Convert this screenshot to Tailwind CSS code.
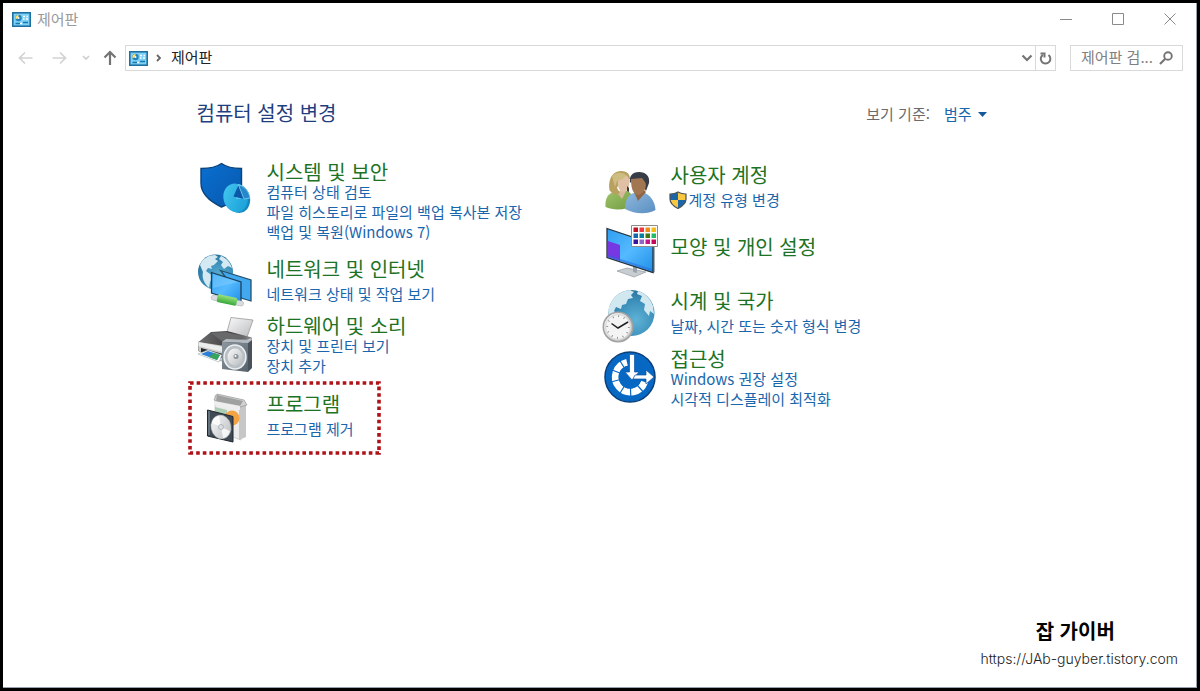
<!DOCTYPE html>
<html lang="ko">
<head>
<meta charset="utf-8">
<meta name="viewport" content="width=device-width, initial-scale=1">
<title>제어판</title>
<script src="https://cdn.jsdelivr.net/npm/@tailwindcss/browser@4"></script>
</head>
<body class="bg-black font-['Noto_Sans_CJK_KR','Noto_Sans',sans-serif]">
<svg width="0" height="0" class="absolute" aria-hidden="true">
  <defs>
    <linearGradient id="shieldBlue" x1="0" y1="0" x2="1" y2="1"><stop offset="0" stop-color="#0a6fd0"/><stop offset="1" stop-color="#0758ad"/></linearGradient>
    <linearGradient id="pieBlue" x1="0" y1="0" x2="1" y2="1"><stop offset="0" stop-color="#45c8f0"/><stop offset="1" stop-color="#159bd6"/></linearGradient>
    <radialGradient id="globeBlue" cx=".6" cy=".65" r=".7"><stop offset="0" stop-color="#5fb2d6"/><stop offset=".6" stop-color="#3b8fba"/><stop offset="1" stop-color="#276f98"/></radialGradient>
    <linearGradient id="screenBlue" x1="0" y1="0" x2="1" y2="1"><stop offset="0" stop-color="#2f9df0"/><stop offset=".5" stop-color="#55baff"/><stop offset="1" stop-color="#1f8fe8"/></linearGradient>
    <linearGradient id="metal" x1="0" y1="0" x2="1" y2="1"><stop offset="0" stop-color="#fafafa"/><stop offset="1" stop-color="#b9bcbf"/></linearGradient>
    <linearGradient id="darkTop" x1="0" y1="0" x2="1" y2="0"><stop offset="0" stop-color="#6d6d6f"/><stop offset=".6" stop-color="#3f3f41"/><stop offset="1" stop-color="#8b8b8d"/></linearGradient>
    <linearGradient id="speaker" x1="0" y1="0" x2="1" y2="1"><stop offset="0" stop-color="#8d979f"/><stop offset="1" stop-color="#56616b"/></linearGradient>
    <linearGradient id="green" x1="0" y1="0" x2="0" y2="1"><stop offset="0" stop-color="#9be27c"/><stop offset="1" stop-color="#35a83a"/></linearGradient>
    <linearGradient id="shirtGreen" x1="0" y1="0" x2="1" y2="1"><stop offset="0" stop-color="#a0c46b"/><stop offset="1" stop-color="#719b40"/></linearGradient>
    <linearGradient id="shirtBlue" x1="0" y1="0" x2="1" y2="1"><stop offset="0" stop-color="#8fb9de"/><stop offset="1" stop-color="#5a8ec1"/></linearGradient>
    <symbol id="cpanel" viewBox="0 0 19 15">
      <rect x=".75" y=".75" width="17.500" height="13.500" fill="#64c0ee" stroke="#1f6f9f" stroke-width="1.500"/>
      <rect x="2" y="2" width="15" height="11" fill="#7fd0f5"/>
      <circle cx="6.500" cy="6" r="3.200" fill="#2682bd"/><path d="M6.500 6V2.800A3.200 3.200 0 0 0 3.600 7.200z" fill="#ffe066"/><circle cx="6.500" cy="6" r="1" fill="#f0fbff"/>
      <path d="M11 4.500h2M14.500 4.500h1.500M11 7h1.500M14 7h2" stroke="#fff" stroke-width="1.400"/>
      <path d="M3.500 11.500h5M11 10.500h5" stroke="#1778ad" stroke-width="1.600"/><path d="M8 11.500h2" stroke="#fff" stroke-width="1.400"/>
    </symbol>
  </defs>
</svg>

<div class="flex min-h-screen flex-col p-[3px]">
<div class="flex flex-1 flex-col border-r border-b border-gray-400 bg-white">

  <header>
    <div class="flex h-8 items-center pl-[9px]">
      <svg class="h-[15px] w-[19px]"><use href="#cpanel"/></svg>
      <h1 class="ml-1.5 text-[15px] leading-5 text-[#9a9a9a]">제어판</h1>
      <div class="ml-auto flex text-[#8a8a8a]">
        <button aria-label="최소화" class="flex h-8 w-[52px] items-center justify-center"><svg class="size-3" viewBox="0 0 12 12" fill="none" stroke="currentColor"><path d="M0 6.500h12"/></svg></button>
        <button aria-label="최대화" class="flex h-8 w-[52px] items-center justify-center"><svg class="size-3" viewBox="0 0 12 12" fill="none" stroke="currentColor"><path d="M.5.5h11v11H.5z"/></svg></button>
        <button aria-label="닫기" class="flex h-8 w-[52px] items-center justify-center"><svg class="size-3" viewBox="0 0 12 12" fill="none" stroke="currentColor"><path d="M.5.5l11 11M11.500.5l-11 11"/></svg></button>
      </div>
    </div>

    <nav class="mt-2.5 flex items-center pr-[13px] pl-[15px]">
      <button aria-label="뒤로" class="text-[#d2d2d2]"><svg class="size-4" viewBox="0 0 16 16" fill="none" stroke="currentColor" stroke-width="1.700"><path d="M14.500 8H1.500M7 2.500L1.500 8 7 13.500"/></svg></button>
      <button aria-label="앞으로" class="ml-[18px] text-[#d2d2d2]"><svg class="size-4" viewBox="0 0 16 16" fill="none" stroke="currentColor" stroke-width="1.700"><path d="M.5 8h13M8 2.500L13.500 8 8 13.500"/></svg></button>
      <button aria-label="최근 위치" class="ml-3.5 text-[#cfcfcf]"><svg class="size-2" viewBox="0 0 8 8" fill="none" stroke="currentColor" stroke-width="1.700"><path d="M1 2l3 3 3-3"/></svg></button>
      <button aria-label="위로" class="ml-3 text-[#747474]"><svg class="size-4" viewBox="0 0 16 16" fill="none" stroke="currentColor" stroke-width="2.200"><path d="M8 15V2M2.500 7.500L8 2l5.500 5.500"/></svg></button>
      <div class="ml-[7px] flex h-[26px] flex-1 items-center border border-[#d9d9d9] pl-[3px]">
        <svg class="h-[15px] w-[19px]"><use href="#cpanel"/></svg>
        <svg class="ml-[7px] size-2" viewBox="0 0 8 8" fill="none" stroke="#666" stroke-width="1.800"><path d="M2 1l3 3-3 3"/></svg>
        <a href="#" class="ml-2 pb-0.5 text-[15px] leading-5 text-[#222]">제어판</a>
        <button aria-label="이전 위치" class="ml-auto flex h-6 w-4 items-center justify-center text-[#747474]"><svg class="h-2 w-3" viewBox="0 0 12 8" fill="none" stroke="currentColor" stroke-width="2.200"><path d="M1.500 1.500L6 6l4.500-4.500"/></svg></button>
        <button aria-label="새로 고침" class="flex h-6 w-5 items-center justify-center border-l border-[#d9d9d9] text-[#747474]"><svg class="size-[13px]" viewBox="0 0 13 13" fill="none" stroke="currentColor" stroke-width="2"><path d="M9.500 3a4.800 4.800 0 1 1-5.600-.2"/><path d="M1.500 1.500h4v4"/></svg></button>
      </div>
      <form class="ml-3.5 flex h-[26px] w-[113px] items-center border border-[#d9d9d9] pl-2.5" onsubmit="return false">
        <input type="text" aria-label="제어판 검색" placeholder="제어판 검..." class="w-[74px] pb-0.5 text-[15px] leading-5 outline-none placeholder:text-[#808080]">
        <button aria-label="검색" class="ml-1 text-[#747474]"><svg class="size-3.5" viewBox="0 0 14 14" fill="none" stroke="currentColor"><circle cx="9" cy="5" r="3.800" stroke-width="1.900"/><path d="M6 8L1 13" stroke-width="2.200"/></svg></button>
      </form>
    </nav>
  </header>

  <main class="mt-[30px] pr-4">
    <div class="mx-auto max-w-[808px]">
      <div class="flex items-center justify-between px-[9px]">
        <h2 class="pb-0.5 text-[20px] leading-6 text-[#1f3f7f]">컴퓨터 설정 변경</h2>
        <div class="flex items-center text-[15px] leading-6">
          <span class="text-[#6b6b6b]">보기 기준:</span>
          <button class="ml-3.5 flex items-center text-[#1a66ac]">범주<svg class="ml-1.5 h-[5px] w-[9px]" viewBox="0 0 9 5" fill="#14599c"><path d="M0 0h9L4.500 5z"/></svg></button>
        </div>
      </div>

      <div class="mt-[34px] grid grid-cols-2 text-[15px] leading-5 text-[#1a66ac]">
        <div class="flex flex-col items-start">

          <section class="flex gap-3.5 px-[9px]">
            <svg class="size-14 shrink-0" viewBox="0 0 56 56">
              <path d="M24.500 2.500C30 6.500 37 7.500 44.500 7.500V24C44.500 34 35 42 24.500 46 14 41 4 34 4 22V7.500C12 7.500 19 6.500 24.500 2.500z" fill="url(#shieldBlue)" stroke="#0b4279" stroke-width="1.400"/>
              <ellipse cx="41" cy="37.500" rx="12" ry="14.500" transform="rotate(-15 41 37.500)" fill="#1388c0"/>
              <ellipse cx="38.500" cy="37" rx="12" ry="14.500" transform="rotate(-15 38.500 37)" fill="url(#pieBlue)"/>
              <path d="M39 38l2-15c6 1 11 7 12 14z" fill="#5cc9ee"/>
              <path d="M36.500 35.500l5-11.500 5.500 14z" fill="#0c58a8"/><path d="M41.500 24l5.500 14 6-1c-1-6-5-12-11.500-13z" fill="#2687cb" stroke="#8de0fa" stroke-width=".6"/>
            </svg>
            <div>
              <h3 class="text-[20px] leading-[21px] text-[#1d7324]"><a href="#">시스템 및 보안</a></h3>
              <ul><li><a href="#">컴퓨터 상태 검토</a></li><li><a href="#">파일 히스토리로 파일의 백업 복사본 저장</a></li><li><a href="#">백업 및 복원(Windows 7)</a></li></ul>
            </div>
          </section>

          <section class="mt-[11px] flex gap-3.5 px-[9px]">
            <svg class="size-14 shrink-0" viewBox="0 0 56 56">
              <circle cx="18.500" cy="19" r="17.500" fill="url(#globeBlue)"/>
              <path d="M3 12C6 5 12 2 18 2l3 2-3 2 3 2-4 4-3 1 1 3-4-1-2 3 4 3 3 2-3 6-1 6C6 29 5 24 6 19zM24 3c5 2 9 6 11 12l-4-2-4 3-3-4 2-3-4-3z" fill="#d4e9f1"/>
              <path d="M23.500 17.500L54 27v21l-10-3z" fill="#42a9f0" stroke="#22516f" stroke-width="1.300"/>
              <path d="M14.500 19.500L44 29v20l-29.500-9z" fill="url(#screenBlue)" stroke="#1e4058" stroke-width="1.300"/>
              <path d="M16 21l25 8-25 6z" fill="#8ad2ff" opacity=".45"/>
              <g transform="rotate(12 30 47)"><rect x="14" y="45" width="33" height="5" rx="2.500" fill="#d9dde0" stroke="#a7acb0" stroke-width=".5"/><rect x="20" y="43" width="20" height="8" rx="2" fill="url(#green)"/></g>
            </svg>
            <div class="pt-[5px]">
              <h3 class="text-[20px] leading-[21px] text-[#1d7324]"><a href="#">네트워크 및 인터넷</a></h3>
              <ul class="mt-[5px]"><li><a href="#">네트워크 상태 및 작업 보기</a></li></ul>
            </div>
          </section>

          <section class="mt-1.5 flex gap-3.5 px-[9px]">
            <svg class="size-14 shrink-0 overflow-visible" viewBox="0 0 56 56">
              <path d="M34 2.500l22 2.500-6 17-20-5z" fill="url(#metal)" stroke="#999" stroke-width=".8"/>
              <path d="M1.500 27v9l23 10 30-5V23z" fill="#c9cbcd" stroke="#808080" stroke-width=".6"/>
              <path d="M1.500 27L14 17l16-1 25 6.500L34 32z" fill="url(#darkTop)"/>
              <path d="M14 18l15-1 20 5-23 5z" fill="#68696b"/>
              <path d="M1.500 27L26 32v5L1.500 31z" fill="#eceded"/>
              <path d="M4 33l22 6v4L4 37z" fill="#252628"/>
              <path d="M1 39l10-4 14 5-3 7z" fill="#fff" stroke="#9aa" stroke-width=".6"/><path d="M4 39l7-3 12 4-3 5z" fill="#2a7fd6"/><path d="M12 42l5-4 6 2-3 5z" fill="#3aa55a"/>
              <path d="M25 27l4-3 26 1-4 3z" fill="#b2bac0"/><path d="M51 28l4-3v28l-4 4z" fill="#48525b"/>
              <path d="M25 27l26 1v29l-26-3z" fill="url(#speaker)"/>
              <ellipse cx="38" cy="42" rx="11" ry="12" fill="#b8c0c5" stroke="#edf0f2" stroke-width="1.500"/>
              <ellipse cx="38" cy="42" rx="7.500" ry="8.500" fill="url(#metal)"/><circle cx="39" cy="41.500" r="2.500" fill="#8a949b"/><circle cx="38.500" cy="41" r="1" fill="#fff"/>
            </svg>
            <div>
              <h3 class="text-[20px] leading-[21px] text-[#1d7324]"><a href="#">하드웨어 및 소리</a></h3>
              <ul><li><a href="#">장치 및 프린터 보기</a></li><li><a href="#">장치 추가</a></li></ul>
            </div>
          </section>

          <section class="relative mt-[5px] flex w-[193px] gap-3.5 px-[9px] pt-2 pb-2.5">
            <svg class="pointer-events-none absolute inset-0 size-full overflow-visible" fill="none" aria-hidden="true"><rect x="2" y="2" width="189" height="70" stroke="#b01217" stroke-width="3.600" stroke-dasharray="3.600 3.040"/></svg>
            <svg class="size-14 shrink-0" viewBox="0 0 56 56">
              <path d="M18 6l26 8v37l-26-9z" fill="#ececec" stroke="#bbb" stroke-width=".6"/>
              <path d="M42 15l7-2v35l-7 3z" fill="#c7c7c7"/>
              <path d="M17 11l3-6 27 6 3 5-7 2-24-6z" fill="#d2d2d2" stroke="#979797" stroke-width=".7"/><path d="M20 6l26 6-3 5-24-5z" fill="#9fa0a0"/><path d="M17 12l26 5v4l-26-5z" fill="#eee"/>
              <path d="M18 18l12 3v9l-12-3z" fill="#abcdb3"/>
              <circle cx="35" cy="29" r="7.500" fill="#f3a343"/>
              <path d="M10.500 21L36 27.500v25.500L10.500 47z" fill="#3f4a55" stroke="#20262c" stroke-width="1"/><path d="M12 22v24" stroke="#8999a4"/>
              <ellipse cx="24" cy="38" rx="10" ry="12" transform="rotate(-12 24 38)" fill="url(#metal)" stroke="#a1a9ae" stroke-width=".5"/>
              <path d="M24 38l-9-4c1-4 4-7 7-7zM24 38l9 4c-1 4-4 7-7 7z" fill="#fff" opacity=".8"/>
              <circle cx="24" cy="38" r="2.500" fill="#dce0e3" stroke="#9aa5ad" stroke-width=".7"/>
            </svg>
            <div class="pt-1">
              <h3 class="text-[20px] leading-[21px] text-[#1d7324]"><a href="#">프로그램</a></h3>
              <ul class="mt-[5px]"><li><a href="#">프로그램 제거</a></li></ul>
            </div>
          </section>
        </div>

        <div class="flex flex-col items-start">
          <section class="flex gap-3.5 px-[9px]">
            <svg class="size-14 shrink-0" viewBox="0 0 56 56">
              <path d="M4.500 46c-.5-8 1.500-13 9.500-16h12c5 2 7 6 7 14-7 5-20 6-28.500 2z" fill="url(#shirtGreen)"/>
              <path d="M15 30l6 8 4-8z" fill="#d9b99b"/>
              <path d="M9 30C7 25 8 10 20 10c7 0 9 4 9 8l-10 2-3 7 3 5-5 2z" fill="#b8a05f"/>
              <path d="M17 19c4 0 6-3 8-5 4 3 4 7 3 11-1 4-4 7-7 6-3-1-5-7-4-12z" fill="#e0c0a5"/>
              <path d="M11 15c4-4 10-4 14-1-2 4-6 5-9 6l-2 6z" fill="#cdbd81"/>
              <path d="M24 48c0-10 4-15 11-17h6c8 2 13 9 13.500 18-9 5-21 4-30.500-1z" fill="url(#shirtBlue)"/>
              <path d="M33 31l4 9 8-9-3-3h-7z" fill="#8f6546"/>
              <path d="M29 22c-1-7 2-11 9-11s11 4 10 11l-3 8-4-7-10-3z" fill="#373d46"/>
              <path d="M30 18l11-1 3 4c3 4-2 13-7 13-6-1-7-9-7-16z" fill="#a27650"/>
              <path d="M26 25l2 2v4l-2-1z" fill="#403a36"/>
            </svg>
            <div class="pt-[3px]">
              <h3 class="text-[20px] leading-[21px] text-[#1d7324]"><a href="#">사용자 계정</a></h3>
              <ul class="mt-[5px]"><li><a href="#" class="-ml-0.5 flex items-center"><svg class="mr-0.5 size-[18px]" viewBox="0 0 18 18"><path d="M9 1c2.500 1.500 5 2 8 2v5c0 4-4 7.500-8 9.500C5 15.500 1 12 1 8V3c3 0 5.500-.5 8-2z" fill="#f9c840"/><path d="M9 1v8H1V3c3 0 5.500-.5 8-2zM9 9h8c-.5 3.500-4 6.500-8 8.500z" fill="#1c66a8"/><path d="M9 1c2.500 1.500 5 2 8 2v5c0 4-4 7.500-8 9.500C5 15.500 1 12 1 8V3c3 0 5.500-.5 8-2z" fill="none" stroke="#4b5358" stroke-width="1.200"/></svg>계정 유형 변경</a></li></ul>
            </div>
          </section>

          <section class="mt-[7px] flex gap-3.5 px-[9px]">
            <svg class="size-14 shrink-0 overflow-visible" viewBox="0 0 56 56">
              <path d="M16 47l10-3 19 4-12 5z" fill="#c8cdd1" stroke="#878e94" stroke-width=".6"/><path d="M32 40h4v9l-4-1z" fill="#9ca4aa"/>
              <path d="M52 22l2-1v27l-2 1z" fill="#a8afb3"/>
              <path d="M6 4.500L52 20v28.500L6 33.500z" fill="url(#screenBlue)" stroke="#25313b" stroke-width="1.300"/>
              <path d="M7 17l12 4v16L7 33z" fill="#7638e2"/><path d="M19 37L7 33v-2l44 14v2z" fill="#2a6ade" opacity=".55"/>
              <path d="M30.500 1.500h26v21h-26z" fill="#fff" stroke="#8c8c8c"/>
              <path d="M32.500 3.500h4.500v4.500h-4.500z" fill="#c10f24"/><path d="M38.500 3.500h4.500v4.500h-4.500z" fill="#f2383e"/><path d="M44.500 3.500h4.500v4.500h-4.500z" fill="#f08b19"/><path d="M50.500 3.500h4.500v4.500h-4.500z" fill="#f5bd13"/>
              <path d="M32.500 9.500h4.500v4.500h-4.500z" fill="#1766ad"/><path d="M38.500 9.500h4.500v4.500h-4.500z" fill="#067fa1"/><path d="M44.500 9.500h4.500v4.500h-4.500z" fill="#427817"/><path d="M50.500 9.500h4.500v4.500h-4.500z" fill="#20bd69"/>
              <path d="M32.500 15.500h4.500v4.500h-4.500z" fill="#3b119d"/><path d="M38.500 15.500h4.500v4.500h-4.500z" fill="#8f66c9"/><path d="M44.500 15.500h4.500v4.500h-4.500z" fill="#c4138e"/><path d="M50.500 15.500h4.500v4.500h-4.500z" fill="#c8095a"/>
            </svg>
            <div class="pt-3"><h3 class="text-[20px] leading-[21px] text-[#1d7324]"><a href="#">모양 및 개인 설정</a></h3></div>
          </section>

          <section class="mt-[7px] flex gap-3.5 px-[9px]">
            <svg class="size-14 shrink-0" viewBox="0 0 56 56">
              <circle cx="30.500" cy="26" r="23" fill="url(#globeBlue)"/>
              <path d="M9 18C12 9 20 4 29 3l4 2-3 3 2 3-5 1-2 5-4 1-1 4-5-2-2 4 3 3-4 2-4-1c-1-4-1-7 1-10zM37 4c7 2 12 7 15 15l1 8-4-3-1 5-5-6 1-6-5-3 2-5-5-2z" fill="#d2e8f1"/>
              <circle cx="17" cy="40" r="14.700" fill="url(#metal)" stroke="#a2a2a2" stroke-width="1.600"/><circle cx="17" cy="40" r="12.500" fill="#f4f4f4" stroke="#d8d8d8"/>
              <circle cx="17" cy="40" r="10.800" fill="none" stroke="#777" stroke-width="1.800" stroke-dasharray=".8 4.855"/>
              <path d="M10.500 36.500L17 41l10-6" fill="none" stroke="#222" stroke-width="1.500"/>
            </svg>
            <div class="pt-[3px]">
              <h3 class="text-[20px] leading-[21px] text-[#1d7324]"><a href="#">시계 및 국가</a></h3>
              <ul class="mt-[5px]"><li><a href="#">날짜, 시간 또는 숫자 형식 변경</a></li></ul>
            </div>
          </section>

          <section class="mt-[5px] flex gap-3.5 px-[9px]">
            <svg class="size-14 shrink-0" viewBox="0 0 56 56">
              <circle cx="29" cy="29" r="25" fill="#0768c4" stroke="#0a3f7a" stroke-width="1.500"/>
              <path d="M26 14.400A15 15 0 1 0 43.500 34" fill="none" stroke="#fff" stroke-width="7"/>
              <path d="M29 29L16 8M29 29L6 20M29 29L6 35M29 29L16 50M29 29l1 24M29 29l16 18" stroke="#0768c4" stroke-width="1.200"/>
              <circle cx="29" cy="29" r="11.500" fill="#0768c4"/>
              <path d="M28.500 6.500h5V24h4.500l-7 8-7-8h4.500z" fill="#fff" stroke="#0a55a5" stroke-width=".7"/>
              <path d="M34 27h11v-5l8 7-8 7v-5H32z" fill="#fff" stroke="#0a55a5" stroke-width=".7"/>
            </svg>
            <div>
              <h3 class="text-[20px] leading-[21px] text-[#1d7324]"><a href="#">접근성</a></h3>
              <ul><li><a href="#">Windows 권장 설정</a></li><li><a href="#">시각적 디스플레이 최적화</a></li></ul>
            </div>
          </section>
        </div>
      </div>
    </div>
  </main>

  <footer class="mt-auto flex flex-col items-end pr-[18px] pb-[18px]">
    <div class="text-center">
      <p class="pr-2 text-[20px] leading-6 font-bold text-black">잡 가이버</p>
      <a href="#" class="mt-1.5 block font-['Inter',sans-serif] text-sm leading-5 font-light text-[#222]">https://JAb-guyber.tistory.com</a>
    </div>
  </footer>
</div>
</div>
</body>
</html>
